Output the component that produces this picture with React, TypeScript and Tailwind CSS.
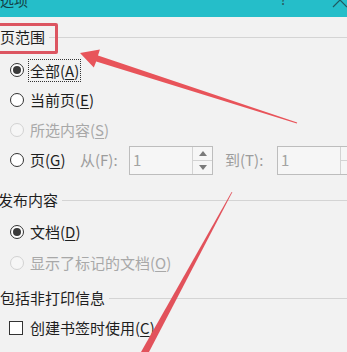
import React from "react";

const FONT = { fontFamily: '"Noto Sans CJK SC", "Noto Sans", sans-serif' };

function Radio({ checked, disabled }: { checked?: boolean; disabled?: boolean }) {
  return (
    <span
      className={
        "flex h-[14px] w-[14px] shrink-0 items-center justify-center rounded-full border " +
        (disabled ? "border-[#d2d2d2] bg-[#f6f6f6]" : "border-[#333] bg-white")
      }
    >
      {checked && <span className="h-[8px] w-[8px] rounded-full bg-[#3a3a3a]" />}
    </span>
  );
}

function Mn({ pre, k, post = ")" }: { pre: string; k: string; post?: string }) {
  return (
    <>
      {pre}(<span className="underline underline-offset-[2px] decoration-1">{k}</span>
      {post}
    </>
  );
}

function Section({ title, ml = "ml-0" }: { title: string; ml?: string }) {
  return (
    <div className="flex h-[30px] items-center">
      <span className={"shrink-0 whitespace-nowrap text-[15px] text-[#1e1e1e] " + ml}>{title}</span>
      <div className="ml-[4px] h-px flex-1 bg-[#d4d4d4]" />
    </div>
  );
}

function Spin({ w }: { w: string }) {
  return (
    <div className={"flex h-[29px] shrink-0 border border-[#bdbdbd] bg-[#f6f6f6] " + w}>
      <div className="flex flex-1 items-center pl-[3px] text-[15px] text-[#a3a3a3]">1</div>
      <div className="flex w-[20px] flex-col border-l border-[#d3d3d3]">
        <div className="flex flex-1 items-center justify-center border-b border-[#d3d3d3]">
          <svg width="8" height="5" viewBox="0 0 8 5">
            <path d="M0 5 L4 0 L8 5 Z" fill="#7a7a7a" />
          </svg>
        </div>
        <div className="flex flex-1 items-center justify-center">
          <svg width="8" height="5" viewBox="0 0 8 5">
            <path d="M0 0 L4 5 L8 0 Z" fill="#7a7a7a" />
          </svg>
        </div>
      </div>
    </div>
  );
}

export default function App() {
  return (
    <div className="relative h-[352px] w-[347px] overflow-hidden bg-[#f2f2f2]" style={FONT}>
      {/* title bar */}
      <div className="flex h-[17px] overflow-hidden bg-[#25bec9]">
        <span className="-mt-[10px] shrink-0 text-[14px] leading-[20px] text-[#123f45]">选项</span>
        <span className="-mt-[11px] ml-[252px] shrink-0 text-[14px] leading-[20px] text-[#2a5a60]">?</span>
        <svg className="-mt-[8px] ml-[45px] shrink-0" width="16" height="16" viewBox="0 0 16 16">
          <path d="M1 1 L15 15 M15 1 L1 15" stroke="#1f5a60" strokeWidth="1.2" />
        </svg>
      </div>

      <div className="flex flex-col">
        <div className="mt-[5px]">
          <Section title="页范围" />
        </div>

        <div className="mt-[3px] flex h-[30px] items-center pl-[10px]">
          <Radio checked />
          <span className="ml-[4px] shrink-0 border border-dotted border-[#333] px-[1px] text-[15px] leading-[21px] text-[#1e1e1e]">
            <Mn pre="全部" k="A" />
          </span>
        </div>

        <div className="flex h-[30px] items-center pl-[10px]">
          <Radio />
          <span className="ml-[6px] shrink-0 text-[15px] text-[#1e1e1e]">
            <Mn pre="当前页" k="E" />
          </span>
        </div>

        <div className="flex h-[30px] items-center pl-[10px]">
          <Radio disabled />
          <span className="ml-[6px] shrink-0 text-[15px] text-[#a8a8a8]">
            <Mn pre="所选内容" k="S" />
          </span>
        </div>

        <div className="flex h-[30px] items-center pl-[10px]">
          <Radio />
          <span className="ml-[6px] w-[50px] shrink-0 text-[15px] text-[#1e1e1e]">
            <Mn pre="页" k="G" />
          </span>
          <span className="w-[49px] shrink-0 whitespace-nowrap text-[15px] text-[#9c9c9c]">从(F):</span>
          <Spin w="w-[84px]" />
          <span className="ml-[12px] w-[52px] shrink-0 whitespace-nowrap text-[15px] text-[#9c9c9c]">到(T):</span>
          <Spin w="w-[84px]" />
        </div>

        <div className="mt-[10px]">
          <Section title="发布内容" ml="-ml-[2px]" />
        </div>

        <div className="mt-[2px] flex h-[30px] items-center pl-[10px]">
          <Radio checked />
          <span className="ml-[6px] shrink-0 text-[15px] text-[#1e1e1e]">
            <Mn pre="文档" k="D" />
          </span>
        </div>

        <div className="mt-[1px] flex h-[30px] items-center pl-[10px]">
          <Radio disabled />
          <span className="ml-[6px] shrink-0 text-[15px] text-[#a8a8a8]">
            <Mn pre="显示了标记的文档" k="O" />
          </span>
        </div>

        <div className="mt-[5px]">
          <Section title="包括非打印信息" />
        </div>

        <div className="flex h-[30px] items-center pl-[9px]">
          <span className="h-[14px] w-[14px] shrink-0 border border-[#333] bg-white" />
          <span className="ml-[7px] shrink-0 text-[15px] text-[#1e1e1e]">
            <Mn pre="创建书签时使用" k="C" />
          </span>
        </div>
      </div>

      {/* red highlight box */}
      <div className="pointer-events-none absolute left-[-6px] top-[23px] h-[31px] w-[64px] rounded-[2px] border-[3px] border-[#dc5561]" />

      {/* red arrows */}
      <svg className="pointer-events-none absolute left-0 top-0" width="347" height="352" viewBox="0 0 347 352">
        <polygon
          points="80,53 99.9,49.4 98,55.6 297.2,122.5 296.8,123.5 96.2,61.4 93.8,67.6"
          fill="#e8545a"
        />
        <polygon points="231.6,192 232.4,192 149,352 141,352" fill="#e2525b" />
      </svg>
    </div>
  );
}
